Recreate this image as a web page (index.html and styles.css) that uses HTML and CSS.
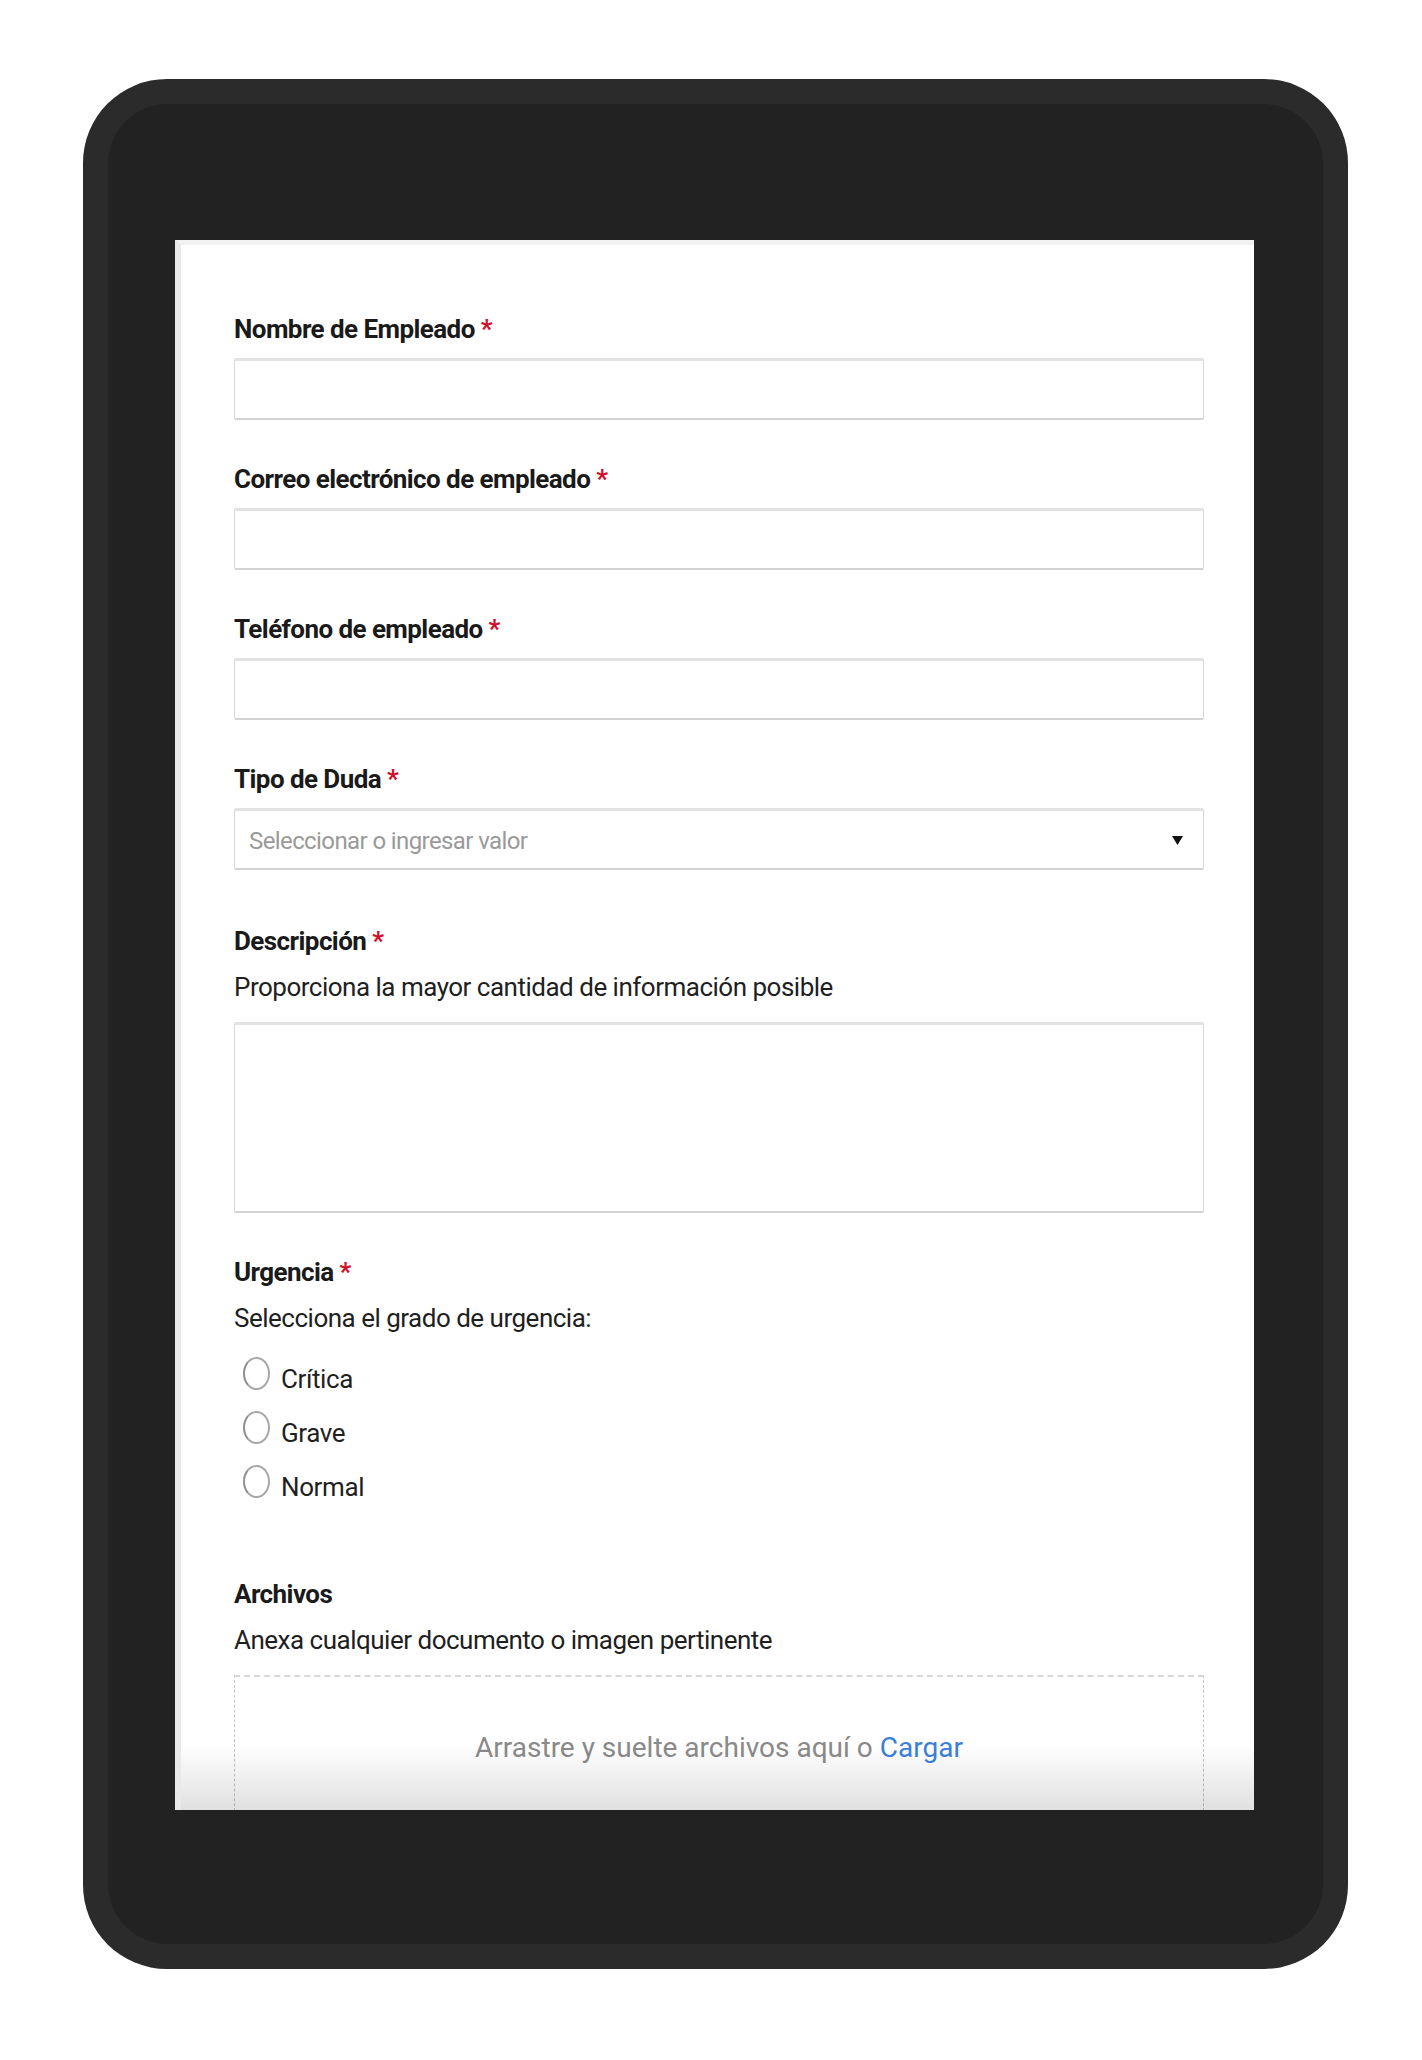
FILE: index.html
```html
<!DOCTYPE html>
<html lang="es">
<head>
<meta charset="UTF-8" />
<meta name="viewport" content="width=device-width, initial-scale=1" />
<title>Solicitud de soporte</title>
<link rel="stylesheet" href="styles.css">
</head>
<body>

<div class="tablet">
  <div class="bezel">
    <div class="screen">
      <form class="ticket-form">

        <div class="field">
          <label class="field-label">Nombre de Empleado <span class="req">*</span></label>
          <input type="text" class="field-input" />
        </div>

        <div class="field">
          <label class="field-label">Correo electrónico de empleado <span class="req">*</span></label>
          <input type="email" class="field-input" />
        </div>

        <div class="field">
          <label class="field-label">Teléfono de empleado <span class="req">*</span></label>
          <input type="tel" class="field-input" />
        </div>

        <div class="field field-select">
          <label class="field-label">Tipo de Duda <span class="req">*</span></label>
          <div class="select-box">
            <span class="placeholder">Seleccionar o ingresar valor</span>
            <svg class="caret" width="11" height="9" viewBox="0 0 11 9"><polygon points="0,0 11,0 5.5,9" fill="#111"/></svg>
          </div>
        </div>

        <div class="field">
          <label class="field-label">Descripción <span class="req">*</span></label>
          <div class="field-hint">Proporciona la mayor cantidad de información posible</div>
          <textarea class="field-area"></textarea>
        </div>

        <div class="field field-radios">
          <label class="field-label">Urgencia <span class="req">*</span></label>
          <div class="field-hint">Selecciona el grado de urgencia:</div>
          <div class="radio-list">
            <label class="radio-row"><input type="radio" name="urgencia" /><span class="radio-text">Crítica</span></label>
            <label class="radio-row"><input type="radio" name="urgencia" /><span class="radio-text">Grave</span></label>
            <label class="radio-row"><input type="radio" name="urgencia" /><span class="radio-text">Normal</span></label>
          </div>
        </div>

        <div class="field">
          <label class="field-label">Archivos</label>
          <div class="field-hint">Anexa cualquier documento o imagen pertinente</div>
          <div class="dropzone">
            Arrastre y suelte archivos aquí o <a href="#" class="upload-link">Cargar</a>
          </div>
        </div>

      </form>
    </div>
  </div>
</div>

</body>
</html>
```

FILE: styles.css
```css
body {
  margin: 0;
  background: #fff;
  font-family: Roboto, "Liberation Sans", Arial, sans-serif;
  color: #1d1d1d;
}
.tablet {
  width: 1265px;
  height: 1890px;
  margin: 79px 0 0 83px;
  padding: 25px;
  box-sizing: border-box;
  background: #2b2b2b;
  border-radius: 84px;
}
.bezel {
  height: 100%;
  padding: 136px 69px 0 67px;
  box-sizing: border-box;
  background: #222;
  border-radius: 60px;
}
.screen {
  position: relative;
  height: 1570px;
  box-sizing: border-box;
  background: #fff;
  border-left: 6px solid #e9e9e9;
  border-top: 5px solid #f1f1f1;
  overflow: hidden;
}
/* grey fade at the bottom edge of the screen */
.screen::after {
  content: "";
  position: absolute;
  left: 0;
  right: 0;
  bottom: 0;
  height: 66px;
  background: linear-gradient(rgba(0,0,0,0), rgba(0,0,0,0.12));
}
.ticket-form {
  padding: 69px 50px 0 53px;
}
.field {
  margin-bottom: 44px;
}
.field-select {
  margin-bottom: 56px;
}
.field-radios {
  margin-bottom: 81px;
}
.field-label {
  display: block;
  margin-bottom: 14px;
  font-size: 26px;
  font-weight: bold;
  letter-spacing: -0.57px;
  line-height: 30px;
  color: #1a1a1a;
}
.req {
  color: #d0102a;
}
.field-hint {
  margin: -14px 0 0;
  padding-top: 16px;
  font-size: 26px;
  letter-spacing: -0.5px;
  line-height: 30px;
  color: #1f1f1f;
}
.field-input,
.field-area,
.select-box {
  display: block;
  width: 100%;
  box-sizing: border-box;
  margin: 0;
  background: #fff;
  border: 1px solid #d8d8d8;
  border-top: 3px solid #e2e2e2;
  border-bottom: 2px solid #d3d3d3;
  border-radius: 2px;
  font-family: inherit;
  font-size: 24px;
}
.field-input {
  height: 62px;
}
.field-area {
  height: 191px;
  margin-top: 20px;
  resize: none;
}
.select-box {
  height: 62px;
  display: flex;
  align-items: center;
  justify-content: space-between;
  padding: 2px 20px 0 14px;
}
.placeholder {
  font-size: 24px;
  letter-spacing: -0.6px;
  color: #9a9a9a;
}
.radio-list {
  display: flex;
  flex-direction: column;
  gap: 21px;
  margin-top: 24px;
}
.radio-row {
  display: flex;
  align-items: flex-start;
  height: 33px;
}
.radio-row input {
  appearance: none;
  -webkit-appearance: none;
  width: 27px;
  height: 33px;
  margin: 0 11px 0 9px;
  border: 2px solid #a8a8a8;
  border-left-color: #8f8f8f;
  border-radius: 50%;
  background: #fff;
}
.radio-text {
  margin-top: 7px;
  font-size: 26px;
  letter-spacing: -0.4px;
  line-height: 30px;
  color: #1f1f1f;
}
.dropzone {
  margin-top: 20px;
  padding: 54px 0 60px;
  border: 1px dashed #c4c4c4;
  border-top: 2px dashed #d8d8d8;
  text-align: center;
  font-size: 28px;
  letter-spacing: 0;
  line-height: 34px;
  color: #8a8a8a;
}
.upload-link {
  color: #3a80d9;
  text-decoration: none;
}
```
